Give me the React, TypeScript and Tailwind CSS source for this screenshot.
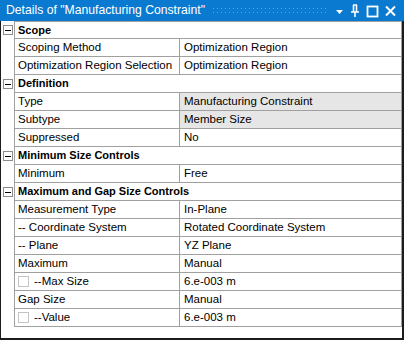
import React from "react";

type Row =
  | { kind: "header"; label: string }
  | { kind: "prop"; name: string; value: string; gray?: boolean; check?: boolean };

const rows: Row[] = [
  { kind: "header", label: "Scope" },
  { kind: "prop", name: "Scoping Method", value: "Optimization Region" },
  { kind: "prop", name: "Optimization Region Selection", value: "Optimization Region" },
  { kind: "header", label: "Definition" },
  { kind: "prop", name: "Type", value: "Manufacturing Constraint", gray: true },
  { kind: "prop", name: "Subtype", value: "Member Size", gray: true },
  { kind: "prop", name: "Suppressed", value: "No" },
  { kind: "header", label: "Minimum Size Controls" },
  { kind: "prop", name: "Minimum", value: "Free" },
  { kind: "header", label: "Maximum and Gap Size Controls" },
  { kind: "prop", name: "Measurement Type", value: "In-Plane" },
  { kind: "prop", name: "-- Coordinate System", value: "Rotated Coordinate System" },
  { kind: "prop", name: "-- Plane", value: "YZ Plane" },
  { kind: "prop", name: "Maximum", value: "Manual" },
  { kind: "prop", name: "--Max Size", value: "6.e-003 m", check: true },
  { kind: "prop", name: "Gap Size", value: "Manual" },
  { kind: "prop", name: "--Value", value: "6.e-003 m", check: true },
];

function Collapse() {
  return (
    <div className="flex h-[10px] w-[10px] items-center justify-center border border-[#8c8c8c] bg-white">
      <div className="h-px w-[6px] bg-black" />
    </div>
  );
}

function TitleBar() {
  return (
    <div className="flex h-[21px] items-center bg-[#0a7ad1] pl-[6px] pr-[8px] text-white">
      <span className="whitespace-nowrap text-[12.2px] leading-none">
        Details of "Manufacturing Constraint"
      </span>
      <svg className="ml-[8px] h-[8px] flex-1" preserveAspectRatio="none">
        <defs>
          <pattern id="dots" width="4" height="4" patternUnits="userSpaceOnUse">
            <rect x="0" y="1" width="1" height="1" fill="#5aa8e6" />
            <rect x="2" y="5" width="1" height="1" fill="#5aa8e6" />
          </pattern>
        </defs>
        <rect width="100%" height="100%" fill="url(#dots)" />
      </svg>
      <div className="ml-[8px] flex items-center gap-[6px]">
        <svg width="9" height="14" viewBox="0 0 9 14">
          <path d="M1 6 L8 6 L4.5 10 Z" fill="white" />
        </svg>
        <svg width="10" height="14" viewBox="0 0 10 14">
          <path d="M3 1 H7 M3.5 1 V8 M6.5 1 V8 M1 8 H9 M5 8 V13" stroke="white" strokeWidth="1.6" fill="none" />
        </svg>
        <svg width="13" height="14" viewBox="0 0 13 14">
          <rect x="1.5" y="2.5" width="10" height="10" stroke="white" strokeWidth="1.8" fill="none" />
        </svg>
        <svg width="11" height="14" viewBox="0 0 11 14">
          <path d="M1 2.5 L10 11.5 M10 2.5 L1 11.5" stroke="white" strokeWidth="2" fill="none" />
        </svg>
      </div>
    </div>
  );
}

export default function App() {
  return (
    <div className="h-[340px] w-[404px] overflow-hidden bg-white font-['Liberation_Sans',Arial,sans-serif] text-[11.5px] text-black">
      <TitleBar />
      <div className="flex h-[319px] flex-col border-b-2 border-l border-r-2 border-[#1c1c1c] bg-white">
        {rows.map((row, i) => (
          <div key={i} className="flex h-[18px]">
            <div className="flex w-[13px] shrink-0 items-center justify-center">
              {row.kind === "header" && <Collapse />}
            </div>
            <div
              className={`flex flex-1 border-b border-l border-r border-[#a0a0a0] ${
                i === 0 ? "border-t" : ""
              }`}
            >
              {row.kind === "header" ? (
                <div className="flex items-center pl-[3px] text-[11px] font-bold leading-none">{row.label}</div>
              ) : (
                <>
                  <div className="flex w-[165px] shrink-0 items-center gap-[5px] whitespace-nowrap border-r border-[#a0a0a0] pl-[3px] leading-none">
                    {row.check && <div className="h-[11px] w-[11px] border border-[#c4c4c4] bg-white" />}
                    <span>{row.name}</span>
                  </div>
                  <div
                    className={`flex flex-1 items-center whitespace-nowrap pl-[4px] leading-none ${
                      row.gray ? "bg-[#e6e6e6]" : ""
                    }`}
                  >
                    {row.value}
                  </div>
                </>
              )}
            </div>
          </div>
        ))}
      </div>
    </div>
  );
}
